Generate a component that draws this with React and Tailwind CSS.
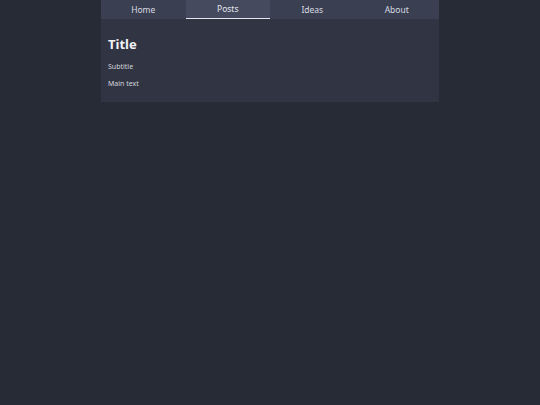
export default function App() {
  const tabs = ["Home", "Posts", "Ideas", "About"];
  const active = "Posts";

  return (
    <div className="min-h-screen w-full bg-[#272b36] font-['Noto_Sans',sans-serif]">
      <div className="mx-auto w-[338px]">
        <nav className="flex h-[19px] bg-[#3a3f51]">
          {tabs.map((t) => (
            <div
              key={t}
              className={
                t === active
                  ? "flex flex-1 items-center justify-center border-b border-[#e5e7ef] bg-[#454a5e] pt-[1px] text-[8.5px] text-[#e4e6ee]"
                  : "flex flex-1 items-center justify-center pt-[2px] text-[8.5px] text-[#d9dbe4]"
              }
            >
              {t}
            </div>
          ))}
        </nav>
        <div className="bg-[#313543] px-[7px] pt-[17px] pb-[13px]">
          <h1 className="text-[13px] font-bold leading-[16px] text-[#f1f2f6]">Title</h1>
          <p className="mt-[10px] text-[7px] leading-[10px] text-[#d2d4dd]">Subtitle</p>
          <p className="mt-[7px] text-[7px] leading-[10px] text-[#d2d4dd]">Main text</p>
        </div>
      </div>
    </div>
  );
}
